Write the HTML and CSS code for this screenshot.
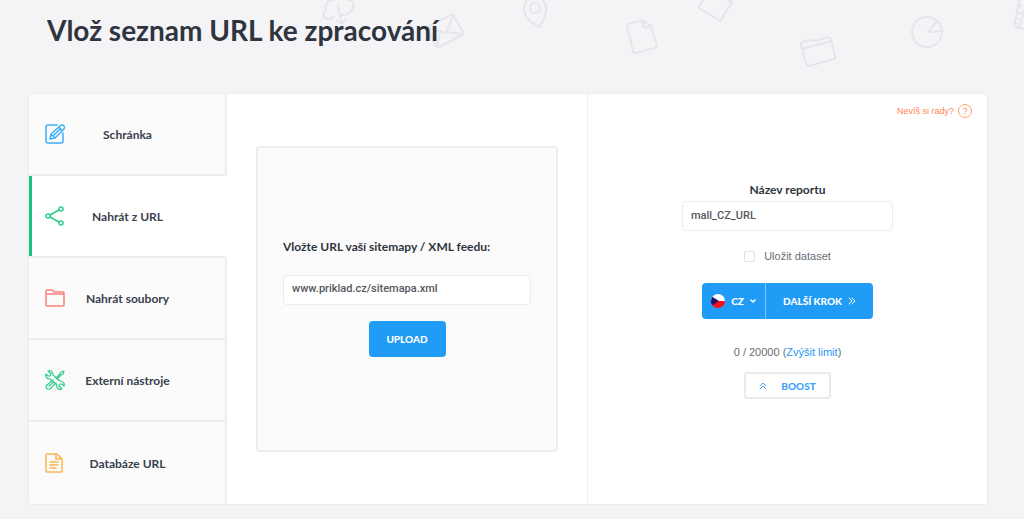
FILE: index.html
```html
<!DOCTYPE html>
<html lang="cs">
<head>
    <meta charset="UTF-8">
    <meta name="viewport" content="width=device-width, initial-scale=1.0">
    <title>Vlož seznam URL ke zpracování</title>
    <link rel="stylesheet" href="styles.css">
</head>
<body>
    <header class="header">
        <svg class="doodles" viewBox="0 0 1024 90" preserveAspectRatio="xMaxYMin slice" aria-hidden="true">
            <!-- cloud download -->
            <path d="M334 17l-5 2c-6 0-7-7-3-9-2-7 4-11 9-10 4-6 12-5 13 0 6 0 7 7 3 11-2 3-6 4-9 4M338 6l4 17M337 21l5 3 4-5"/>
            <!-- envelope -->
            <path d="M427 27l24-12q2-1 3 1l9 16q1 2-1 3l-23 12q-2 1-3-1l-9-17q-1-2 0-2zM427 28l19 5 7-17M446 32l17 2M437 47l3-14"/>
            <!-- map pin -->
            <path d="M540 27c-9-4-16-10-16-18 0-7 5-12 11-12s11 5 11 11c1 6-3 13-6 19z"/>
            <circle cx="535" cy="8" r="5"/>
            <!-- page -->
            <path d="M642 20l-14 4q-2 1-1 2l6 25q1 2 3 2l19-5q2-1 2-2l-6-20zM642 20l2 8 7-2"/>
            <!-- tilted page -->
            <path d="M705-3l-6 10 1 2 19 11q1 1 2 0l11-18-6-3"/>
            <!-- folder -->
            <path d="M802 42l7-2 5 1 14-4q2 0 3 2l4 17q1 2-1 3l-25 7q-2 0-3-2l-5-19q-1-2 1-3zM802 49l29-8"/>
            <!-- pie chart -->
            <circle cx="927" cy="32" r="15"/>
            <path d="M937 21l-9 11 15-1"/>
            <!-- building -->
            <path d="M1020-2l-6 28 10 3M1024 11l-5 18M1017 12l7 2M1018 5l3 1M1016 18l3 1M1015 23l3 1"/>
        </svg>
        <h1>Vlož seznam URL ke zpracování</h1>
    </header>

    <main class="card">
        <nav class="tabs">
            <button class="tab" type="button">
                <svg class="icon blue" viewBox="0 0 20 20"><path d="M12 1H3Q1 1 1 3v14q0 2 2 2h13q2 0 2-2V9M5 15l1-5 9-8q2-2 4 0 1 1 0 3l-9 9zM6 10l4 4M14 3l3 4M8 12l7-7"/></svg>
                <span>Schránka</span>
            </button>
            <button class="tab active" type="button">
                <svg class="icon green" viewBox="0 0 20 20"><circle cx="3" cy="10" r="2"/><circle cx="16" cy="3" r="2"/><circle cx="16" cy="17" r="2"/><path d="M5 9l9-5M5 11l9 5"/></svg>
                <span>Nahrát z URL</span>
            </button>
            <button class="tab" type="button">
                <svg class="icon red" viewBox="0 0 20 20"><path d="M2 2h5l2 2h9q1 0 1 1v12q0 1-1 1H2q-1 0-1-1V3q0-1 1-1zM1 6h18"/></svg>
                <span>Nahrát soubory</span>
            </button>
            <button class="tab" type="button">
                <svg class="icon green tools" viewBox="0 0 20 20">
                    <path class="shade" d="M8 20h6"/>
                    <path d="M3 1l3 3-1 2-2 0-2-2c-1 3 1 5 4 5l7 6c-1 3 2 5 5 4l-3-3 1-2 2 0 2 2c1-3-1-5-4-5L8 5c0-3-2-5-5-4z"/>
                    <path d="M11 8l4-4 1-2 3-1-1 3-2 1-4 4M8 10l-6 5c-2 2 0 5 3 4l6-6M4 16l5-4"/>
                </svg>
                <span>Externí nástroje</span>
            </button>
            <button class="tab" type="button">
                <svg class="icon orange" viewBox="0 0 20 20"><path d="M12 1H2Q1 1 1 2v16q0 1 1 1h14q1 0 1-1V6zM11 1v5h6M5 9h8M5 12h8M5 15h6"/></svg>
                <span>Databáze URL</span>
            </button>
        </nav>

        <section class="source">
            <form class="upload-box">
                <label for="sitemap">Vložte URL vaší sitemapy / XML feedu:</label>
                <input class="text-input" type="text" id="sitemap" value="www.priklad.cz/sitemapa.xml">
                <button class="btn upload" type="button">UPLOAD</button>
            </form>
        </section>

        <section class="report">
            <a class="help" href="#">Nevíš si rady? <span class="help-icon">?</span></a>
            <form class="report-form">
                <label for="report-name">Název reportu</label>
                <input class="text-input" type="text" id="report-name" value="mall_CZ_URL">
                <label class="dataset"><input type="checkbox"> Uložit dataset</label>
                <div class="btn-group">
                    <button class="btn country" type="button">
                        <svg class="flag" viewBox="0 0 14 14">
                            <clipPath id="flag-round"><circle cx="7" cy="7" r="7"/></clipPath>
                            <g clip-path="url(#flag-round)">
                                <path fill="#fff" d="M0 0h14v7H0z"/>
                                <path fill="#fb0d1b" d="M0 7h14v7H0z"/>
                                <path fill="#1d1464" d="M0 2l8 5-8 5z"/>
                            </g>
                        </svg>
                        CZ
                        <svg class="caret" viewBox="0 0 6 6"><path d="M1 2l2 2 2-2"/></svg>
                    </button>
                    <button class="btn next" type="button">
                        DALŠÍ KROK
                        <svg class="chevrons" viewBox="0 0 8 8"><path d="M1 1l3 3-3 3M4 1l3 3-3 3"/></svg>
                    </button>
                </div>
                <p class="limit">0 / 20000 (<a href="#">Zvýšit limit</a>)</p>
                <button class="boost" type="button">
                    <svg class="chevrons" viewBox="0 0 8 8"><path d="M1 4l3-3 3 3M1 7l3-3 3 3"/></svg>
                    BOOST
                </button>
            </form>
        </section>
    </main>
</body>
</html>
```

FILE: styles.css
```css
* {
    box-sizing: border-box;
}

body {
    font-family: Lato, 'Open Sans', sans-serif;
    margin: 0;
    background-color: #f4f4f7;
    color: #2f353e;
}

button, input {
    font-family: inherit;
}

svg {
    fill: none;
    stroke-linecap: round;
    stroke-linejoin: round;
}

.header {
    position: relative;
    padding: 11px 47px 0;
    height: 94px;
}

.header h1 {
    position: relative;
    margin: 0;
    font-size: 28px;
    line-height: 38px;
    font-weight: 700;
}

.doodles {
    position: absolute;
    top: 0;
    left: 0;
    width: 100%;
    height: 90px;
    stroke: #e6e6ea;
    stroke-width: 2;
}

.card {
    display: grid;
    grid-template-columns: 198px 19fr 21fr;
    margin: 0 37px 15px 29px;
    background: white;
    border-radius: 3px;
    box-shadow: 0 0 2px rgba(0, 0, 0, 0.12);
}

/* Tabs */
.tabs {
    display: grid;
    grid-auto-rows: 82px;
}

.tab {
    display: grid;
    grid-template-columns: 20px 1fr 20px;
    align-items: center;
    padding: 0 15px 0 16px;
    border: 0 solid #eeeeee;
    border-width: 0 2px 2px 0;
    background: #fbfbfb;
    color: #39414d;
    font-size: 12px;
    font-weight: 700;
    cursor: pointer;
}

.tab:first-child {
    border-top-left-radius: 3px;
}

.tab:last-child {
    border-bottom: 0;
    border-bottom-left-radius: 3px;
}

.tab.active {
    background: white;
    border-right-color: white;
    box-shadow: inset 3px 0 #15c27e;
}

.icon {
    width: 20px;
    height: 20px;
    stroke-width: 1.5;
}

.blue { stroke: #42adf5; }
.green { stroke: #2fcd8b; }
.red { stroke: #fb8278; }
.orange { stroke: #fdb44e; }

.tools {
    stroke-width: 1.2;
}

.tools .shade {
    stroke: #fcc9c4;
}

/* Upload */
.source {
    display: flex;
    align-items: center;
    padding: 0 29px;
    border-right: 1px solid #eeeeee;
}

.upload-box {
    display: flex;
    flex-direction: column;
    justify-content: center;
    align-items: center;
    flex: 1;
    min-height: 306px;
    padding: 0 25px 4px;
    background: #fbfbfb;
    border: 2px solid #ededed;
    border-radius: 4px;
}

.upload-box label {
    align-self: flex-start;
    margin-bottom: 19px;
    font-size: 12px;
    line-height: 18px;
    font-weight: 700;
}

.text-input {
    width: 100%;
    height: 30px;
    padding: 0 8px 2px;
    border: 1px solid #ececf0;
    border-radius: 4px;
    background: white;
    color: #55585e;
    font-family: Roboto, sans-serif;
    font-size: 11px;
    font-weight: 500;
}

.btn {
    height: 36px;
    border: 0;
    border-radius: 4px;
    background: #219cf6;
    color: white;
    font-size: 10px;
    font-weight: 900;
    cursor: pointer;
}

.upload {
    width: 77px;
    margin-top: 16px;
}

/* Report */
.report {
    display: flex;
    flex-direction: column;
    padding: 10px 15px;
}

.help {
    display: flex;
    align-items: center;
    align-self: flex-end;
    gap: 4px;
    color: #ff8552;
    font-family: 'Liberation Sans', Arial, sans-serif;
    font-size: 9px;
    text-decoration: none;
}

.help-icon {
    width: 14px;
    height: 14px;
    border: 1px solid #ffa468;
    border-radius: 50%;
    line-height: 12px;
    text-align: center;
}

.report-form {
    display: flex;
    flex-direction: column;
    align-items: center;
    width: 211px;
    margin: 63px auto 0;
    font-size: 12px;
    line-height: 18px;
    font-weight: 700;
}

.report-form .text-input {
    margin-top: 2px;
}

.dataset {
    display: flex;
    align-items: center;
    gap: 9px;
    margin-top: 16px;
    color: #6a6d73;
    font-family: 'Liberation Sans', Arial, sans-serif;
    font-size: 11px;
    font-weight: 400;
}

.dataset input {
    appearance: none;
    width: 11px;
    height: 11px;
    margin: 0;
    border: 1px solid #e0e0e6;
    border-radius: 2px;
    background: white;
}

.dataset input:checked {
    background: #219cf6;
}

.btn-group {
    display: flex;
    margin-top: 18px;
}

.btn-group .btn {
    display: flex;
    align-items: center;
    justify-content: center;
}

.country {
    width: 63px;
    gap: 6px;
    border-radius: 4px 0 0 4px;
}

.next {
    width: 108px;
    gap: 6px;
    border-left: 1px solid #7cc4fa;
    border-radius: 0 4px 4px 0;
}

.flag {
    width: 14px;
    height: 14px;
}

.caret {
    width: 6px;
    height: 6px;
    stroke: white;
    stroke-width: 1.5;
}

.chevrons {
    width: 8px;
    height: 8px;
    stroke: currentColor;
    stroke-width: 1;
}

.limit {
    margin: 24px 0 11px;
    color: #6a6d73;
    font-family: 'Liberation Sans', Arial, sans-serif;
    font-size: 11px;
    font-weight: 400;
}

.limit a {
    color: #2b96f5;
    text-decoration: none;
}

.boost {
    display: flex;
    align-items: center;
    justify-content: center;
    gap: 14px;
    width: 87px;
    height: 27px;
    border: 2px solid #ebebeb;
    border-radius: 3px;
    background: white;
    color: #419ffb;
    font-size: 10px;
    font-weight: 900;
    cursor: pointer;
}
```
